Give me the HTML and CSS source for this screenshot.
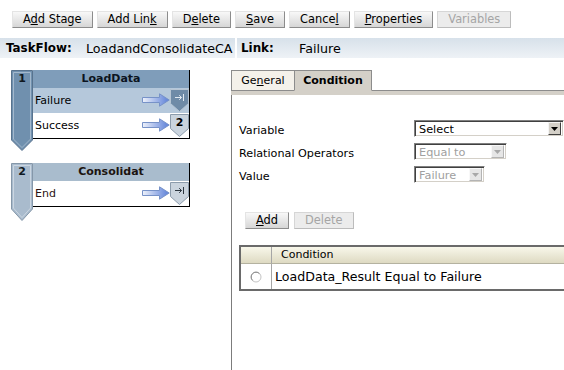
FILE: index.html
```html
<!DOCTYPE html>
<html>
<head>
<meta charset="utf-8">
<link rel="stylesheet" href="styles.css">
</head>
<body>
<div class="toolbar">
  <button class="btn">A<u>d</u>d Stage</button>
  <button class="btn">Add Lin<u>k</u></button>
  <button class="btn">D<u>e</u>lete</button>
  <button class="btn"><u>S</u>ave</button>
  <button class="btn">Cance<u>l</u></button>
  <button class="btn"><u>P</u>roperties</button>
  <button class="btn btn-disabled">Variables</button>
</div>

<div class="infobar">
  <div class="info info-flow"><b class="info-label flow-label">TaskFlow:</b><span class="info-value">LoadandConsolidateCA</span></div>
  <div class="info info-link"><b class="info-label link-label">Link:</b><span class="info-value">Failure</span></div>
</div>

<div class="main">
  <div class="canvas">
    <div class="stage">
      <div class="stage-col">
        <svg width="22" height="81" viewBox="0 0 22 81">
          <path d="M0.5 0.5H21.5V70L11 80.5L0.5 70Z" fill="#7090ae" stroke="#58738e"/>
          <path d="M2.5 2.5H19.5V69.1L11 77.6L2.5 69.1Z" fill="none" stroke="#a3b8cc"/>
        </svg>
        <span class="stage-num">1</span>
      </div>
      <div class="stage-body">
        <div class="stage-head head-active">LoadData</div>
        <div class="stage-row row-selected">
          <span class="row-label">Failure</span>
          <svg class="arrow" width="28" height="14" viewBox="0 0 28 14">
            <defs><linearGradient id="ag1" x1="0" x2="1"><stop offset="0" stop-color="#eef2fb"/><stop offset="1" stop-color="#5b7fd8"/></linearGradient></defs>
            <path d="M0.5 4.5H17.5V0.8L27.2 7L17.5 13.2V9.5H0.5Z" fill="url(#ag1)" stroke="#7792c8"/>
          </svg>
          <svg class="badge" width="19" height="23" viewBox="0 0 19 23">
            <path d="M0.5 0.5H18.5V14.5L9.5 22.5L0.5 14.5Z" fill="#6f8ba7" stroke="#b7c5d3"/>
            <path d="M5 8.5H11.5M9.2 6.2L11.5 8.5L9.2 10.8M13.5 5V12" stroke="#e0e8f0" fill="none"/>
          </svg>
        </div>
        <div class="stage-row">
          <span class="row-label">Success</span>
          <svg class="arrow" width="28" height="14" viewBox="0 0 28 14">
            <defs><linearGradient id="ag2" x1="0" x2="1"><stop offset="0" stop-color="#eef2fb"/><stop offset="1" stop-color="#5b7fd8"/></linearGradient></defs>
            <path d="M0.5 4.5H17.5V0.8L27.2 7L17.5 13.2V9.5H0.5Z" fill="url(#ag2)" stroke="#7792c8"/>
          </svg>
          <svg class="badge" width="19" height="23" viewBox="0 0 19 23">
            <path d="M0.5 0.5H18.5V14.5L9.5 22.5L0.5 14.5Z" fill="#cad4de" stroke="#8c9cac"/>
            <text x="9.5" y="12" text-anchor="middle" class="badge-text">2</text>
          </svg>
        </div>
      </div>
    </div>

    <div class="stage">
      <div class="stage-col">
        <svg width="22" height="58" viewBox="0 0 22 58">
          <path d="M0.5 0.5H21.5V46L11 57.5L0.5 46Z" fill="#a9bbcd" stroke="#8597a9"/>
          <path d="M2.5 2.5H19.5V45.1L11 54.6L2.5 45.1Z" fill="none" stroke="#cbd6e1"/>
        </svg>
        <span class="stage-num">2</span>
      </div>
      <div class="stage-body">
        <div class="stage-head head-idle">Consolidat</div>
        <div class="stage-row">
          <span class="row-label row-end">End</span>
          <svg class="arrow" width="28" height="14" viewBox="0 0 28 14">
            <defs><linearGradient id="ag3" x1="0" x2="1"><stop offset="0" stop-color="#eef2fb"/><stop offset="1" stop-color="#5b7fd8"/></linearGradient></defs>
            <path d="M0.5 4.5H17.5V0.8L27.2 7L17.5 13.2V9.5H0.5Z" fill="url(#ag3)" stroke="#7792c8"/>
          </svg>
          <svg class="badge" width="19" height="23" viewBox="0 0 19 23">
            <path d="M0.5 0.5H18.5V14.5L9.5 22.5L0.5 14.5Z" fill="#cad4de" stroke="#8c9cac"/>
            <path d="M5 8.5H11.5M9.2 6.2L11.5 8.5L9.2 10.8M13.5 5V12" stroke="#2c3640" fill="none"/>
          </svg>
        </div>
      </div>
    </div>
  </div>

  <div class="editor">
    <div class="tabs">
      <div class="tab tab-general">Ge<u>n</u>eral</div>
      <div class="tab tab-active">Condition</div>
      <div class="tab-fill"></div>
    </div>
    <div class="tab-band"></div>
    <div class="panel">
      <div class="form">
        <span class="label">Variable</span>
        <div class="select select-wide">
          <span class="select-text">Select</span>
          <span class="select-btn"><svg width="7" height="4" viewBox="0 0 7 4"><path d="M0 0H7L3.5 4Z" fill="#000"/></svg></span>
        </div>
        <span class="label">Relational Operators</span>
        <div class="select select-mid select-disabled">
          <span class="select-text">Equal to</span>
          <span class="select-btn"><svg width="7" height="4" viewBox="0 0 7 4"><path d="M0 0H7L3.5 4Z" fill="#a8a8a8"/></svg></span>
        </div>
        <span class="label">Value</span>
        <div class="select select-small select-disabled">
          <span class="select-text">Failure</span>
          <span class="select-btn"><svg width="7" height="4" viewBox="0 0 7 4"><path d="M0 0H7L3.5 4Z" fill="#a8a8a8"/></svg></span>
        </div>
      </div>

      <div class="actions">
        <button class="btn"><u>A</u>dd</button>
        <button class="btn btn-disabled">Delete</button>
      </div>

      <div class="table">
        <div class="cell head-cell first-col"></div>
        <div class="cell head-cell head-title">Condition</div>
        <div class="cell row-cell first-col">
          <svg width="12" height="12" viewBox="0 0 12 12">
            <circle cx="6" cy="6" r="5" fill="#fff" stroke="#c4c4c4"/>
            <path d="M2.6 9.4A4.8 4.8 0 0 1 9.4 2.6" stroke="#8a8a8a" fill="none"/>
          </svg>
        </div>
        <div class="cell row-cell row-text">LoadData_Result Equal to Failure</div>
      </div>
    </div>
  </div>
</div>
</body>
</html>
```

FILE: styles.css
```css
html, body {
  margin: 0;
  padding: 0;
  overflow: hidden;
  background: #fff;
}

body {
  width: 564px;
  height: 370px;
  font-family: "DejaVu Sans", Verdana, sans-serif;
  font-size: 11px;
  color: #000;
}

/* toolbar buttons */
.toolbar {
  display: flex;
  gap: 4px;
  padding: 11px 0 0 12px;
  height: 17px;
}

.btn {
  box-sizing: border-box;
  height: 17px;
  margin: 0;
  padding: 0 10px;
  font-family: inherit;
  font-size: 11.4px;
  line-height: 15px;
  color: #000;
  white-space: nowrap;
  border: 1px solid;
  border-color: #e4e4e4 #8c8c8c #8c8c8c #e4e4e4;
  background: linear-gradient(#f8f8f8, #d6d6d6);
}

.btn-disabled {
  color: #a5a5a5;
  background: #ececec;
  border-color: #d6d6d6 #bcbcbc #bcbcbc #d6d6d6;
}

/* info bar */
.infobar {
  display: flex;
  gap: 2px;
  margin-top: 10px;
  height: 20px;
}

.info {
  display: flex;
  align-items: center;
  background: linear-gradient(#d7e1ea, #eef2f6);
}

.info-flow {
  width: 235px;
  flex: none;
  box-sizing: border-box;
  padding-left: 6px;
}

.info-link {
  flex: 1;
  padding-left: 4px;
}

.info-label {
  font-size: 11.9px;
  font-weight: bold;
  flex: none;
}

.flow-label { width: 80px; }
.link-label { width: 58px; }

.info-value {
  font-size: 12.7px;
  white-space: nowrap;
}

/* main area */
.main {
  display: flex;
  padding-top: 12px;
}

.canvas {
  width: 231px;
  flex: none;
  box-sizing: border-box;
  padding-left: 11px;
  display: flex;
  flex-direction: column;
  gap: 12px;
}

.stage {
  display: flex;
  align-items: flex-start;
}

.stage-col {
  display: grid;
  width: 22px;
  flex: none;
}

.stage-col > * {
  grid-area: 1 / 1;
}

.stage-col svg {
  display: block;
}

.stage-num {
  justify-self: center;
  font-weight: bold;
  line-height: 18px;
  color: #101820;
}

.stage-body {
  width: 157px;
  box-sizing: border-box;
  border-right: 1px solid #000;
  border-bottom: 1px solid #000;
}

.stage-head {
  height: 18px;
  line-height: 18px;
  text-align: center;
  font-weight: bold;
}

.head-active { background: #7f9dba; color: #0c1420; }
.head-idle { background: #a9bccd; color: #1c1410; }

.stage-row {
  display: flex;
  align-items: flex-start;
  height: 25px;
  padding-left: 2px;
}

.row-selected { background: #b5c8db; }

.row-label {
  flex: 1;
  line-height: 25px;
}

.row-end { color: #2a1212; }

.arrow {
  display: block;
  margin-top: 5px;
}

.badge {
  display: block;
  margin-top: 1px;
}

.badge-text {
  font-family: "DejaVu Sans", Verdana, sans-serif;
  font-size: 11px;
  font-weight: bold;
  fill: #000;
}

/* editor */
.editor {
  flex: 1;
  display: flex;
  flex-direction: column;
  height: 300px;
}

.tabs {
  display: flex;
  height: 21px;
}

.tab {
  box-sizing: border-box;
  height: 21px;
  line-height: 19px;
  text-align: center;
  border: 1px solid #8c8c8c;
  border-bottom-color: #8c8c8c;
}

.tab-general {
  width: 63px;
  background: #f4f1ea;
  border-right: none;
}

.tab-active {
  width: 78px;
  background: #d4d0c8;
  font-weight: bold;
  border-bottom-color: #d4d0c8;
}

.tab-fill {
  flex: 1;
  border-bottom: 1px solid #8c8c8c;
}

.tab-band {
  height: 4px;
  background: #d4d0c8;
}

.panel {
  flex: 1;
  border-left: 1px solid #7c7c7c;
  padding: 25px 0 0 7px;
}

.form {
  display: grid;
  grid-template-columns: 175px auto;
  row-gap: 6px;
  align-items: center;
}

.label {
  font-size: 11.2px;
  padding-top: 3px;
}

.select {
  box-sizing: border-box;
  height: 17px;
  display: flex;
  align-items: center;
  background: #fff;
  border: 1px solid;
  border-color: #808080 #ffffff #ffffff #808080;
  box-shadow: inset 1px 1px 0 #404040, inset -1px -1px 0 #d4d0c8;
  padding: 0 2px 0 4px;
}

.select-wide { width: 150px; }
.select-mid { width: 93px; }
.select-small { width: 71px; }

.select-text {
  flex: 1;
  font-size: 11.3px;
  white-space: nowrap;
  padding-top: 1px;
}

.select-btn {
  box-sizing: border-box;
  width: 13px;
  height: 13px;
  display: flex;
  align-items: center;
  justify-content: center;
  background: #d4d0c8;
  border: 1px solid;
  border-color: #f4f4f4 #404040 #404040 #f4f4f4;
}

.select-disabled .select-text { color: #a0a0a0; }

.select-disabled .select-btn {
  background: #e6e6e6;
  border-color: #f8f8f8 #b4b4b4 #b4b4b4 #f8f8f8;
}

.actions {
  display: flex;
  gap: 5px;
  margin: 29px 0 0 6px;
}

.table {
  margin-top: 16px;
  width: 340px;
  border: 2px solid #6a6a6a;
  display: grid;
  grid-template-columns: 31px 1fr;
}

.cell {
  box-sizing: border-box;
}

.first-col {
  border-right: 1px solid #a6a6a6;
  display: flex;
  align-items: center;
  justify-content: center;
}

.head-cell {
  height: 17px;
  line-height: 16px;
  border-bottom: 1px solid #b4b2a0;
  background: linear-gradient(#f8f7ea, #dedac2);
}

.head-title {
  padding-left: 9px;
}

.row-cell {
  height: 25px;
}

.row-text {
  font-size: 12.6px;
  line-height: 25px;
  padding-left: 3px;
  white-space: nowrap;
}
```
